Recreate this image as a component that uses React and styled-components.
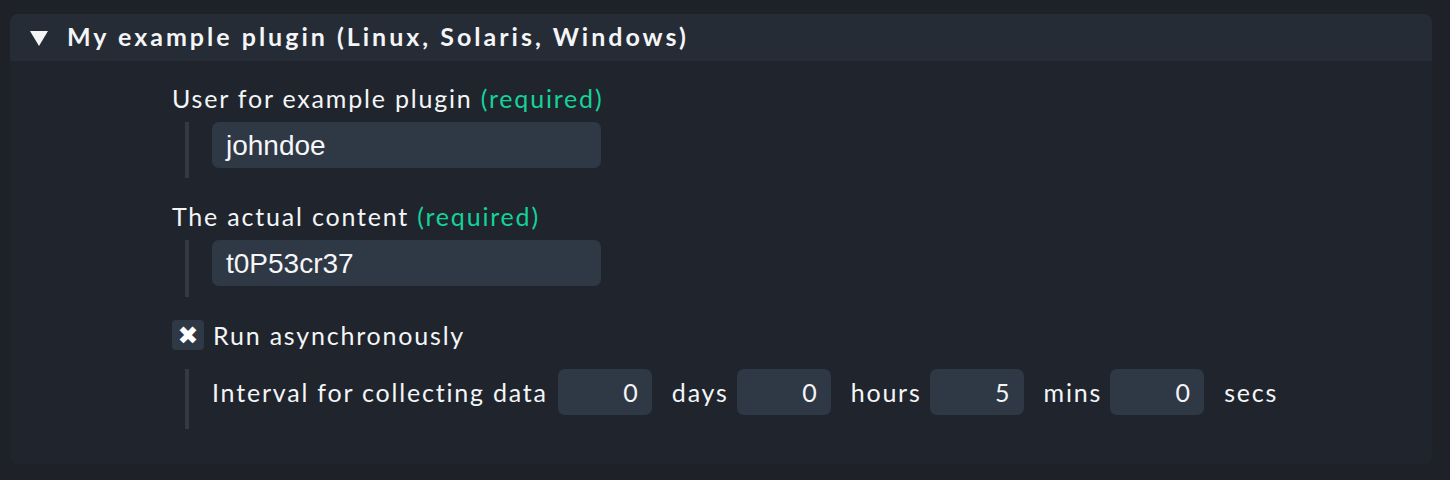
import React from "react";
import styled, { createGlobalStyle } from "styled-components";

const Global = createGlobalStyle`
  html, body { margin: 0; padding: 0; background: #1e2128; }
  body { font-family: Lato, "Open Sans", sans-serif; color: #f4f5f7; }
`;

const Page = styled.div`
  padding: 14px 18px 16px 10px;
`;

const Panel = styled.section`
  background: #20252d;
  border-radius: 8px;
  height: 450px;
  overflow: hidden;
`;

const Header = styled.div`
  height: 47px;
  background: #262c36;
  display: flex;
  align-items: center;
  padding-left: 20px;
  gap: 19px;
`;

const Triangle = styled.span`
  width: 0;
  height: 0;
  border-left: 9px solid transparent;
  border-right: 9px solid transparent;
  border-top: 15px solid #f4f5f7;
  margin-top: 2px;
`;

const Title = styled.h2`
  margin: 0 0 3px;
  font-size: 25px;
  font-weight: 700;
  letter-spacing: 3px;
  line-height: 30px;
`;

const Body = styled.div`
  padding: 22px 0 0 162px;
  display: flex;
  flex-direction: column;
  letter-spacing: 1.8px;
`;

const Label = styled.div`
  font-size: 25px;
  line-height: 30px;
  height: 30px;
  margin-top: ${(p) => p.$mt || 0}px;
`;

const Required = styled.span`
  color: #13d39a;
`;

const Indent = styled.div`
  margin-left: 13px;
  border-left: 4px solid #323a46;
  padding-left: 23px;
  height: ${(p) => p.$h}px;
  margin-top: ${(p) => p.$mt || 0}px;
  display: flex;
  align-items: flex-start;
`;

const TextInput = styled.div`
  width: 389px;
  height: 46px;
  box-sizing: border-box;
  background: #2f3845;
  border-radius: 7px;
  padding: 2px 0 0 14px;
  display: flex;
  align-items: center;
  font-family: "Liberation Sans", Arial, sans-serif;
  font-size: 28px;
  letter-spacing: 0;
  color: #f5f6f8;
`;

const CheckRow = styled.div`
  display: flex;
  align-items: center;
  gap: 9px;
  margin-top: 22px;
  height: 32px;
`;

const CheckBox = styled.span`
  width: 32px;
  height: 30px;
  border-radius: 4px;
  background: #2f3845;
  display: flex;
  align-items: center;
  justify-content: center;
  font-size: 25px;
  line-height: 1;
  letter-spacing: 0;
  color: #ffffff;
  font-family: "DejaVu Sans", sans-serif;
`;

const CheckLabel = styled.span`
  font-size: 25px;
  line-height: 30px;
`;

const IntervalRow = styled.div`
  display: flex;
  align-items: center;
  height: 46px;
  font-size: 25px;
`;

const IntervalText = styled.span`
  margin-right: 10px;
`;

const NumInput = styled.div`
  width: 94px;
  height: 46px;
  box-sizing: border-box;
  background: #2f3845;
  border-radius: 7px;
  padding-right: 14px;
  display: flex;
  align-items: center;
  justify-content: flex-end;
  font-size: 25px;
  letter-spacing: 0;
`;

const Unit = styled.span`
  margin: 0 8px 0 20px;
`;

const units = [
  ["0", "days"],
  ["0", "hours"],
  ["5", "mins"],
  ["0", "secs"],
];

export default function App() {
  return (
    <>
      <Global />
      <Page>
        <Panel>
          <Header>
            <Triangle />
            <Title>My example plugin (Linux, Solaris, Windows)</Title>
          </Header>
          <Body>
            <Label>
              User for example plugin <Required>(required)</Required>
            </Label>
            <Indent $h={56} $mt={9}>
              <TextInput>johndoe</TextInput>
            </Indent>
            <Label $mt={23}>
              The actual content <Required>(required)</Required>
            </Label>
            <Indent $h={57} $mt={9}>
              <TextInput>t0P53cr37</TextInput>
            </Indent>
            <CheckRow>
              <CheckBox>✖</CheckBox>
              <CheckLabel>Run asynchronously</CheckLabel>
            </CheckRow>
            <Indent $h={60} $mt={18}>
              <IntervalRow>
                <IntervalText>Interval for collecting data</IntervalText>
                {units.map(([v, u]) => (
                  <React.Fragment key={u}>
                    <NumInput>{v}</NumInput>
                    <Unit>{u}</Unit>
                  </React.Fragment>
                ))}
              </IntervalRow>
            </Indent>
          </Body>
        </Panel>
      </Page>
    </>
  );
}
